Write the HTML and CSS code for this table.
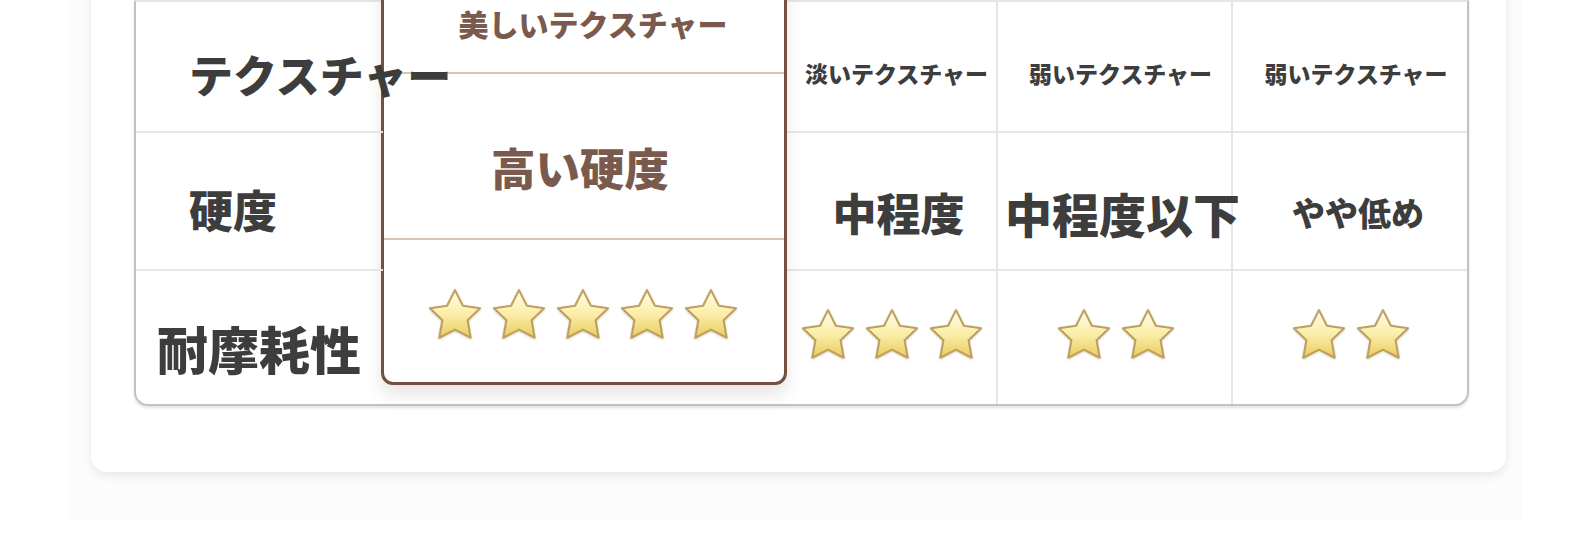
FILE: index.html
```html
<!DOCTYPE html>
<html lang="ja">
<head>
    <meta charset="UTF-8">
    <meta name="viewport" content="width=device-width, initial-scale=1.0">
    <title>比較表</title>
    <link rel="stylesheet" href="styles.css">
</head>
<body>
    <!-- shared star shape -->
    <svg class="defs" width="0" height="0">
        <defs>
            <linearGradient id="star-fill" x1="0" y1="0" x2="0" y2="1">
                <stop offset="0" stop-color="#fffce8"/>
                <stop offset="0.5" stop-color="#fbeeaa"/>
                <stop offset="1" stop-color="#e8cc5c"/>
            </linearGradient>
            <symbol id="star" viewBox="1.6 1.6 20.8 19.8">
                <path d="M12 2.3l3.05 6.05 6.6.95-4.8 4.6 1.2 6.75L12 17.5l-6.05 3.15 1.2-6.75-4.8-4.6 6.6-.95z" fill="url(#star-fill)" stroke="#bfa060" stroke-width="0.8" stroke-linejoin="round"/>
            </symbol>
        </defs>
    </svg>

    <div class="page">
        <div class="frame">
            <div class="card">
                <div class="table">
                    <!-- texture row -->
                    <div class="cell label r1">テクスチャー</div>
                    <div class="cell r1 fs-sm">淡いテクスチャー</div>
                    <div class="cell r1 fs-sm">弱いテクスチャー</div>
                    <div class="cell r1 fs-sm last-col">弱いテクスチャー</div>

                    <!-- hardness row -->
                    <div class="cell label r2">硬度</div>
                    <div class="cell r2 fs-mid">中程度</div>
                    <div class="cell r2 fs-big">中程度以下</div>
                    <div class="cell r2 fs-low last-col">やや低め</div>

                    <!-- wear resistance row -->
                    <div class="cell label label-wide r3">耐摩耗性</div>
                    <div class="cell r3 stars-cell">
                        <div class="stars">
                            <svg class="star"><use href="#star"/></svg>
                            <svg class="star"><use href="#star"/></svg>
                            <svg class="star"><use href="#star"/></svg>
                        </div>
                    </div>
                    <div class="cell r3 stars-cell">
                        <div class="stars">
                            <svg class="star"><use href="#star"/></svg>
                            <svg class="star"><use href="#star"/></svg>
                        </div>
                    </div>
                    <div class="cell r3 stars-cell last-col">
                        <div class="stars">
                            <svg class="star"><use href="#star"/></svg>
                            <svg class="star"><use href="#star"/></svg>
                        </div>
                    </div>

                    <!-- highlighted product column -->
                    <div class="pick">
                        <div class="pick-cell pick-top">美しいテクスチャー</div>
                        <div class="pick-cell pick-mid">高い硬度</div>
                        <div class="pick-cell pick-bottom">
                            <div class="stars">
                                <svg class="star"><use href="#star"/></svg>
                                <svg class="star"><use href="#star"/></svg>
                                <svg class="star"><use href="#star"/></svg>
                                <svg class="star"><use href="#star"/></svg>
                                <svg class="star"><use href="#star"/></svg>
                            </div>
                        </div>
                    </div>
                </div>
            </div>
        </div>
    </div>
</body>
</html>
```

FILE: styles.css
```css
body {
    margin: 0;
    background-color: #fff;
    font-family: "Noto Sans CJK JP", "Noto Sans", sans-serif;
    overflow: hidden;
}
.defs {
    display: block;
    width: 0;
    height: 0;
}
.page {
    padding: 0 59px 0 69px;
}
.frame {
    display: flow-root;
    background-color: #fcfcfc;
    padding: 0 16px 48px 22px;
}
.card {
    background-color: #fff;
    margin-top: -40px;
    padding: 40px 37px 66px 43px;
    border-radius: 16px;
    box-shadow: 0 4px 10px rgba(0, 0, 0, 0.08);
}
.table {
    display: grid;
    grid-template-columns: 247px 402px 213px 235px 234px;
    grid-template-rows: 131px 138px 133px;
    background-color: #fff;
    border: 2px solid #c2c2c2;
    border-top-color: #e6e6e6;
    border-radius: 0 0 14px 14px;
    box-shadow: 0 2px 3px rgba(0, 0, 0, 0.12);
    color: #3d3d3d;
    font-weight: 900;
}
.cell {
    display: flex;
    align-items: center;
    justify-content: center;
    border-right: 2px solid #e6e6e6;
    border-bottom: 2px solid #e6e6e6;
    white-space: nowrap;
    line-height: 1;
}
.cell.last-col {
    border-right: none;
}
.cell.r3 {
    border-bottom: none;
}
.r1 {
    padding-top: 14px;
    padding-left: 12px;
}
.r2 {
    padding-top: 22px;
    padding-left: 16px;
}
.r3 {
    padding-top: 22px;
}
.stars-cell {
    padding-top: 0;
    padding-bottom: 8px;
    padding-left: 2px;
}

/* first column labels sit above the highlighted column */
.label {
    position: relative;
    z-index: 2;
    justify-content: flex-start;
    padding-left: 53px;
    border-right: none;
    font-size: 44px;
}
.label.r2 {
    padding-top: 16px;
    padding-left: 53px;
}
.label-wide {
    padding-left: 21px;
    font-size: 51px;
}
.fs-sm {
    font-size: 23px;
}
.fs-mid {
    font-size: 44px;
}
.fs-big {
    font-size: 47px;
}
.fs-low {
    font-size: 33px;
}

.pick {
    grid-column: 2;
    grid-row: 1 / 4;
    align-self: start;
    z-index: 1;
    box-sizing: border-box;
    width: 406px;
    height: 415px;
    margin: -32px 0 0 -2px;
    display: grid;
    grid-template-rows: 101px 166px 142px;
    background-color: #fff;
    border: 3px solid #73503f;
    border-radius: 12px;
    box-shadow: 0 10px 16px rgba(90, 60, 50, 0.13);
    color: #7b5a4e;
    font-weight: 900;
}
.pick-cell {
    display: flex;
    align-items: center;
    justify-content: center;
    border-bottom: 2px solid #dcc3ba;
    white-space: nowrap;
    line-height: 1;
}
.pick-top {
    font-size: 30px;
    padding-left: 18px;
}
.pick-mid {
    font-size: 44.5px;
    padding-top: 22px;
    padding-right: 8px;
}
.pick-bottom {
    border-bottom: none;
    padding-top: 6px;
    padding-right: 2px;
}
.stars {
    display: flex;
    gap: 10px;
}
.star {
    width: 54px;
    height: 52px;
    filter: drop-shadow(0 1px 1px rgba(120, 90, 30, 0.25));
}
```
